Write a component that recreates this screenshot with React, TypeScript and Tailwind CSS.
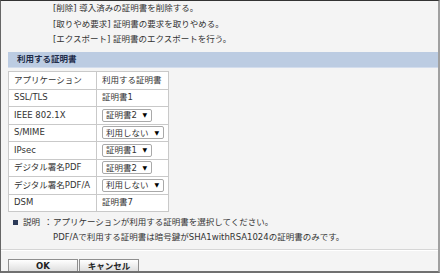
const rows: { app: string; cert: string; select?: boolean; w?: string }[] = [
  { app: "SSL/TLS", cert: "証明書1" },
  { app: "IEEE 802.1X", cert: "証明書2", select: true, w: "w-[50px]" },
  { app: "S/MIME", cert: "利用しない", select: true, w: "w-[62px]" },
  { app: "IPsec", cert: "証明書1", select: true, w: "w-[50px]" },
  { app: "デジタル署名PDF", cert: "証明書2", select: true, w: "w-[50px]" },
  { app: "デジタル署名PDF/A", cert: "利用しない", select: true, w: "w-[62px]" },
  { app: "DSM", cert: "証明書7" },
];

function SelectBox({ value, width }: { value: string; width?: string }) {
  return (
    <span
      className={`inline-flex h-[13px] items-center justify-between rounded-[2px] border border-[#a9a9a9] bg-white pl-[3px] pr-[4px] ${width}`}
    >
      <span className="leading-none">{value}</span>
      <span className="text-[6px] leading-none text-black">▼</span>
    </span>
  );
}

export default function App() {
  return (
    <div className="box-border h-[273px] w-[440px] overflow-hidden border-t border-r-2 border-b-2 border-l border-t-[#333] border-r-[#a0a0a0] border-b-[#707070] border-l-[#666] bg-[#f4f4f4] font-['DejaVu_Sans','Noto_Sans_CJK_JP',sans-serif] text-[8.5px] text-[#333]">
      <div className="h-[51px] pl-[52px] leading-[15.5px]">
        <div>[削除] 導入済みの証明書を削除する。</div>
        <div>[取りやめ要求] 証明書の要求を取りやめる。</div>
        <div>[エクスポート] 証明書のエクスポートを行う。</div>
      </div>

      <div className="ml-[7px] flex h-4 items-center border-b border-b-[#d3dded] bg-[#bccce2] pl-[9px] font-bold text-[#1f2d4a]">
        利用する証明書
      </div>

      <table className="mt-[3px] ml-[7px] w-[161px] border-collapse bg-white">
        <tbody>
          <tr className="h-[17.5px]">
            <td className="w-[88px] border border-[#c9c9c9] pl-[5px]">アプリケーション</td>
            <td className="border border-[#c9c9c9] pl-[5px]">利用する証明書</td>
          </tr>
          {rows.map((r) => (
            <tr key={r.app} className="h-[17.5px]">
              <td className="border border-[#c9c9c9] pl-[5px] whitespace-nowrap">{r.app}</td>
              <td className="border border-[#c9c9c9] pl-[5px] whitespace-nowrap">
                {r.select ? <SelectBox value={r.cert} width={r.w} /> : r.cert}
              </td>
            </tr>
          ))}
        </tbody>
      </table>

      <div className="mt-[3px] flex leading-[15px] whitespace-nowrap">
        <div className="flex h-[15px] w-[52px] shrink-0 items-center">
          <span className="ml-[12px] h-[5px] w-[5px] shrink-0 bg-[#2c3a58]" />
          <span className="ml-[5px]">説明</span>
          <span className="ml-[4px]">：</span>
        </div>
        <div>
          <div>アプリケーションが利用する証明書を選択してください。</div>
          <div>PDF/Aで利用する証明書は暗号鍵がSHA1withRSA1024の証明書のみです。</div>
        </div>
      </div>

      <div className="mt-[4px] h-[2px] border-t border-t-[#d6d6d6] border-b border-b-white" />

      <div className="mt-[8px] ml-[7px] flex">
        <button className="h-[14px] w-[70px] border border-[#8f8f8f] bg-gradient-to-b from-white to-[#dcdcdc] font-bold leading-[12px] text-[#222]">
          OK
        </button>
        <button className="ml-px h-[14px] w-[60px] border border-[#8f8f8f] bg-gradient-to-b from-white to-[#dcdcdc] font-bold leading-[12px] text-[#222]">
          キャンセル
        </button>
      </div>
    </div>
  );
}
